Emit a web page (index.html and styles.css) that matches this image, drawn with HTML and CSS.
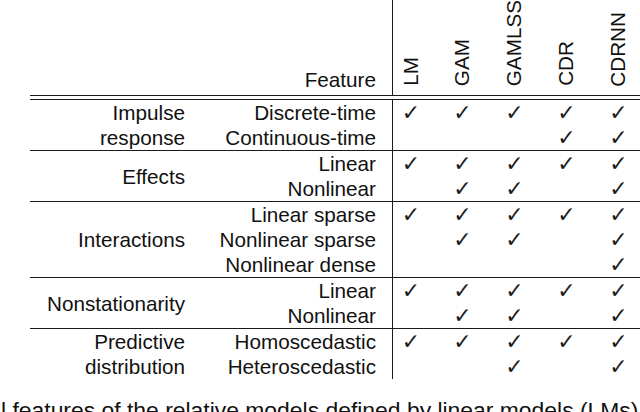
FILE: index.html
```html
<!DOCTYPE html>
<html lang="en">
<head>
<meta charset="utf-8">
<title>Model features</title>
<link rel="stylesheet" href="styles.css">
</head>
<body>
<div class="page">
  <table class="tbl">
    <colgroup>
      <col class="c-grp"><col class="c-feat"><col class="c-m"><col class="c-m"><col class="c-m"><col class="c-m"><col class="c-m">
    </colgroup>
    <thead>
      <tr class="head">
        <th class="g"></th>
        <th class="f">Feature</th>
        <th class="mh first"><span class="rot">LM</span></th>
        <th class="mh"><span class="rot">GAM</span></th>
        <th class="mh"><span class="rot">GAMLSS</span></th>
        <th class="mh"><span class="rot">CDR</span></th>
        <th class="mh"><span class="rot">CDRNN</span></th>
      </tr>
      <tr class="gap"><td colspan="7"></td></tr>
    </thead>
    <tbody>
      <tr>
        <td class="g" rowspan="2">Impulse<br>response</td>
        <td class="f">Discrete-time</td>
        <td class="m first">✓</td><td class="m">✓</td><td class="m">✓</td><td class="m">✓</td><td class="m">✓</td>
      </tr>
      <tr>
        <td class="f">Continuous-time</td>
        <td class="m first"></td><td class="m"></td><td class="m"></td><td class="m">✓</td><td class="m">✓</td>
      </tr>
    </tbody>
    <tbody class="sep">
      <tr>
        <td class="g" rowspan="2">Effects</td>
        <td class="f">Linear</td>
        <td class="m first">✓</td><td class="m">✓</td><td class="m">✓</td><td class="m">✓</td><td class="m">✓</td>
      </tr>
      <tr>
        <td class="f">Nonlinear</td>
        <td class="m first"></td><td class="m">✓</td><td class="m">✓</td><td class="m"></td><td class="m">✓</td>
      </tr>
    </tbody>
    <tbody class="sep">
      <tr>
        <td class="g" rowspan="3">Interactions</td>
        <td class="f">Linear sparse</td>
        <td class="m first">✓</td><td class="m">✓</td><td class="m">✓</td><td class="m">✓</td><td class="m">✓</td>
      </tr>
      <tr>
        <td class="f">Nonlinear sparse</td>
        <td class="m first"></td><td class="m">✓</td><td class="m">✓</td><td class="m"></td><td class="m">✓</td>
      </tr>
      <tr>
        <td class="f">Nonlinear dense</td>
        <td class="m first"></td><td class="m"></td><td class="m"></td><td class="m"></td><td class="m">✓</td>
      </tr>
    </tbody>
    <tbody class="sep">
      <tr>
        <td class="g" rowspan="2">Nonstationarity</td>
        <td class="f">Linear</td>
        <td class="m first">✓</td><td class="m">✓</td><td class="m">✓</td><td class="m">✓</td><td class="m">✓</td>
      </tr>
      <tr>
        <td class="f">Nonlinear</td>
        <td class="m first"></td><td class="m">✓</td><td class="m">✓</td><td class="m"></td><td class="m">✓</td>
      </tr>
    </tbody>
    <tbody class="sep">
      <tr>
        <td class="g" rowspan="2">Predictive<br>distribution</td>
        <td class="f">Homoscedastic</td>
        <td class="m first">✓</td><td class="m">✓</td><td class="m">✓</td><td class="m">✓</td><td class="m">✓</td>
      </tr>
      <tr>
        <td class="f">Heteroscedastic</td>
        <td class="m first"></td><td class="m"></td><td class="m">✓</td><td class="m"></td><td class="m">✓</td>
      </tr>
    </tbody>
  </table>
  <p class="caption">l features of the relative models defined by linear models (LMs)</p>
</div>
</body>
</html>
```

FILE: styles.css
```css
html, body {
  margin: 0;
  padding: 0;
  background: #ffffff;
}

.page {
  width: 640px;
  height: 412px;
  overflow: hidden;
  font-family: "Liberation Sans", Arial, sans-serif;
  font-size: 20.7px;
  color: #111111;
}

.tbl {
  margin-left: 30px;
  width: 622px;
  table-layout: fixed;
  border-collapse: separate;
  border-spacing: 0;
}

.c-grp { width: 170px; }
.c-feat { width: 192px; }
.c-m { width: 52px; }

.tbl th,
.tbl td {
  padding: 0;
  font-weight: normal;
  line-height: 25px;
  height: 25px;
}

.tbl .g {
  text-align: right;
  padding-right: 15px;
  vertical-align: middle;
}

.tbl .f {
  text-align: right;
  padding-right: 16px;
  white-space: nowrap;
}

.tbl .m {
  text-align: center;
  padding-right: 15px;
  font-family: "DejaVu Sans", sans-serif;
  font-size: 22px;
  color: #1c1c1c;
}

.tbl .first {
  border-left: 1px solid #1a1a1a;
}

/* header */
.tbl .head th {
  box-sizing: border-box;
  height: 96px;
  vertical-align: bottom;
  border-bottom: 1px solid #1a1a1a;
}

.tbl .head .f {
  padding-bottom: 3px;
}

.tbl .head .mh {
  text-align: center;
  padding: 0 16px 4px 0;
  font-family: "Liberation Sans", Arial, sans-serif;
  font-size: 20.7px;
}

.rot {
  display: inline-block;
  writing-mode: vertical-rl;
  transform: rotate(180deg);
  line-height: 22px;
}

.tbl .gap td {
  height: 3px;
  line-height: 0;
  font-size: 0;
  border-bottom: 1px solid #1a1a1a;
}

.sep tr:first-child td {
  border-top: 1px solid #1a1a1a;
}

.caption {
  margin: 19px 0 0 1px;
  line-height: 25px;
  font-size: 22.9px;
  white-space: nowrap;
}
```
